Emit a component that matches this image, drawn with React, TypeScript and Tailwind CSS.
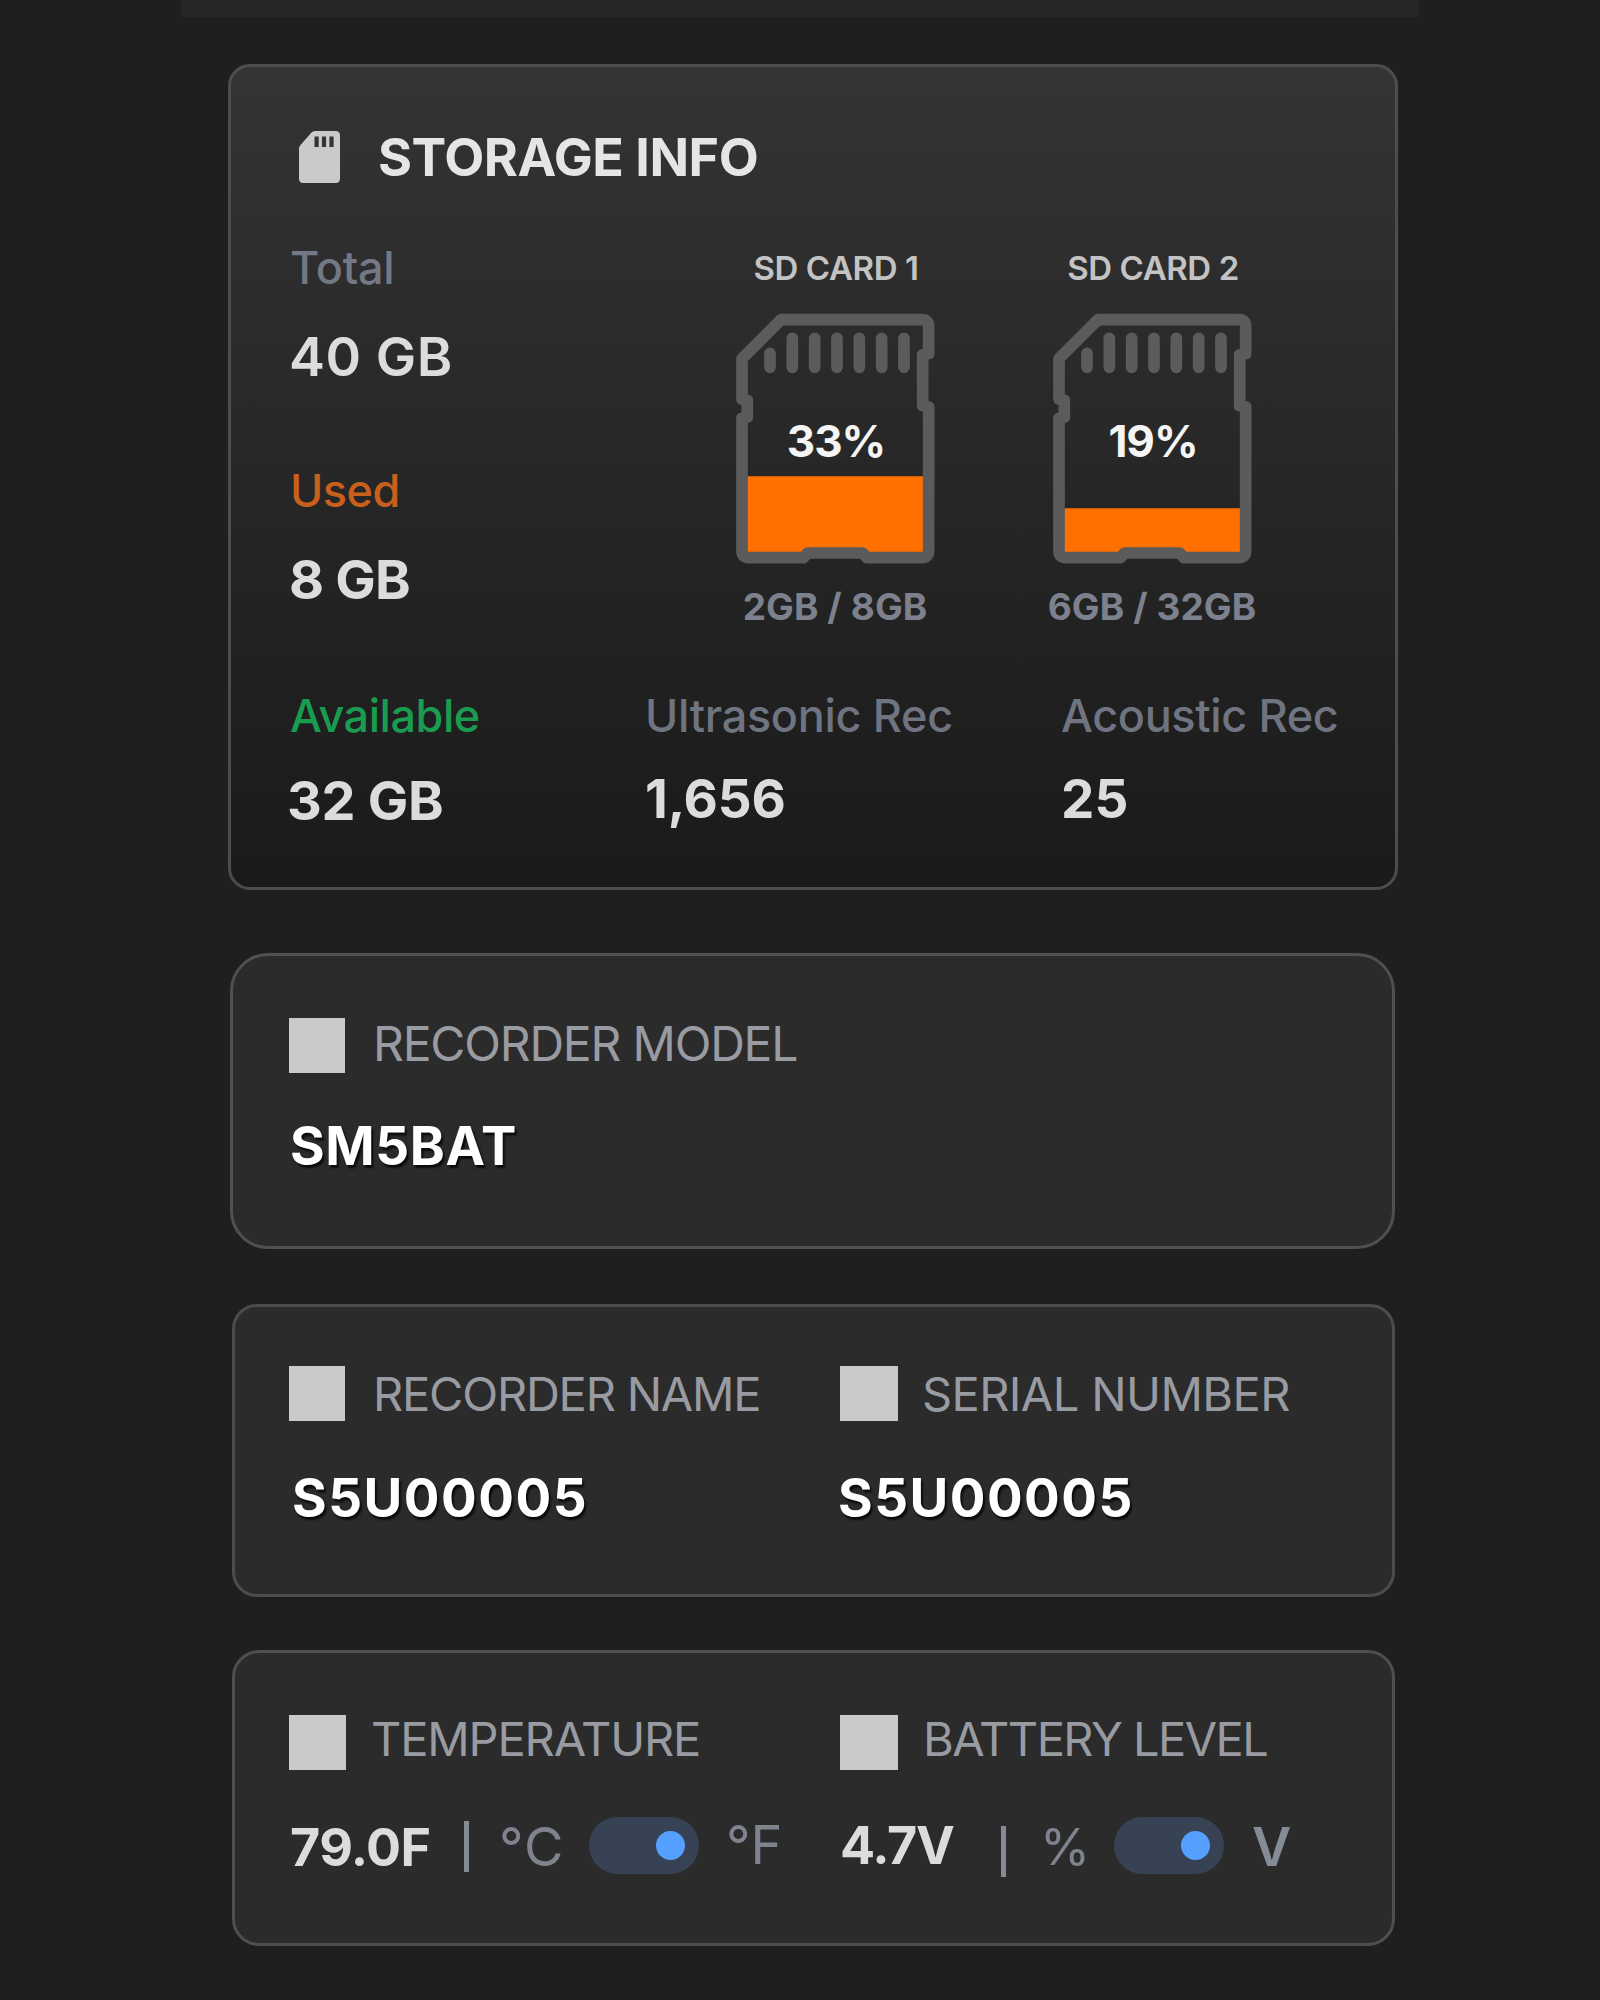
import { useState } from "react";
import type { ReactNode } from "react";

const CARDS = [
  { label: "SD CARD 1", percent: "33%", usage: "2GB / 8GB", fillTop: 738 },
  { label: "SD CARD 2", percent: "19%", usage: "6GB / 32GB", fillTop: 834 },
];

const CONTACTS = [279, 346, 413, 480, 547, 614];

function SdIcon() {
  return (
    <svg width="41" height="52" viewBox="0 0 41 52" className="ml-[10px] shrink-0">
      <path d="M16 0H36.5Q41 0 41 4.5V47.5Q41 52 36.5 52H4.5Q0 52 0 47.5V17.5Q0 15.5 1.5 14L12.5 1.5Q14 0 16 0Z" fill="#c9cbca" />
      <path d="M15.5 5.5h4.2v10.5h-4.2zM22.9 5.5h4.2v10.5h-4.2zM30.4 5.5h4.2v10.5h-4.2z" fill="#333333" />
    </svg>
  );
}

function SdCard({ label, percent, usage, fillTop }: { label: string; percent: string; usage: string; fillTop: number }) {
  return (
    <div className="flex w-[260px] flex-col items-center">
      <div className="pl-0.5 text-[33px] leading-[52px] font-semibold tracking-[-0.4px] text-[#c3c3c4]">{label}</div>
      <div className="relative mt-[18px]">
        <svg width="200" height="253" viewBox="107 245 600 759" fill="none" stroke="#5b5b5b" strokeWidth="35" strokeLinejoin="round">
          <path d={`M143 ${fillTop}H672V970H143Z`} fill="#ff7000" stroke="none" />
          <path d="M245 268H668Q688 268 688 288V370L670 374V526L688 530V962Q688 982 668 982H503L490 968H325L312 982H148Q128 982 128 962V564L144 560V510L128 506V385Z" />
          <path d="M212 369V411" strokeLinecap="round" />
          {CONTACTS.map((x) => <path key={x} d={`M${x} 324V411`} strokeLinecap="round" />)}
        </svg>
        <div className="absolute inset-x-0 top-[103px] pl-0.5 text-center text-[44px] leading-[52px] font-bold tracking-[-1px] text-[#f5f5f5]">{percent}</div>
      </div>
      <div className="mt-4 text-[37px] leading-[52px] font-bold tracking-[0.1px] text-[#7c818d]">{usage}</div>
    </div>
  );
}

function Stat({ label, value, labelClass, valueClass }: { label: string; value: string; labelClass: string; valueClass: string }) {
  return (
    <div>
      <div className={`text-[45px] leading-[52px] font-medium ${labelClass}`}>{label}</div>
      <div className={`leading-[52px] text-[#dcdcde] ${valueClass}`}>{value}</div>
    </div>
  );
}

function Heading({ children, boxClass, textClass }: { children: ReactNode; boxClass: string; textClass: string }) {
  return (
    <div className="flex h-14 items-center">
      <span className={`h-[55px] shrink-0 bg-[#c8cac9] ${boxClass}`} />
      <span className={`leading-[52px] whitespace-nowrap text-[#999ba2] ${textClass}`}>{children}</span>
    </div>
  );
}

function Toggle({ label }: { label: string }) {
  const [on, setOn] = useState(true);
  return (
    <button type="button" role="switch" aria-checked={on} aria-label={label} onClick={() => setOn(!on)} className={`flex h-[57px] w-[110px] shrink-0 items-center rounded-full bg-[#374255] px-[14px] ${on ? "justify-end" : "justify-start"}`}>
      <span className="size-[29px] rounded-full bg-[#559fff]" />
    </button>
  );
}

export default function App() {
  return (
    <div className="flex h-[2000px] w-[1600px] flex-col overflow-hidden bg-[#1f1f1f] font-['Inter',sans-serif]">
      <div className="ml-[181px] h-[17px] w-[1238px] shrink-0 bg-[#272727]" />

      <section className="mt-[47px] ml-[228px] h-[826px] w-[1170px] shrink-0 rounded-[22px] border-3 border-[#4d4d4d] bg-linear-to-b from-[#343434] to-[#1a1a1a] bg-origin-border pt-16 pl-[58px]">
        <div className="flex items-center">
          <SdIcon />
          <h2 className="ml-[38px] pt-0.5 text-[52px] leading-[50px] font-bold tracking-[-0.45px] text-[#e4e5e6]">STORAGE INFO</h2>
        </div>

        <div className="mt-[59px] flex">
          <div className="flex w-[416px] flex-col gap-[82px]">
            <Stat label="Total" value="40 GB" labelClass="ml-px tracking-[-0.2px] text-[#737885]" valueClass="mt-[37px] text-[54px] font-semibold tracking-[0.5px]" />
            <Stat label="Used" value="8 GB" labelClass="ml-px tracking-[-0.5px] text-[#c8601c]" valueClass="mt-[37px] text-[54px] font-bold tracking-[-0.8px]" />
          </div>
          <div className="flex gap-[57px]">
            {CARDS.map((card) => <SdCard key={card.label} {...card} />)}
          </div>
        </div>

        <div className="mt-[57px] flex">
          <div className="w-[356px]">
            <Stat label="Available" value="32 GB" labelClass="ml-px tracking-[-0.45px] text-[#1a9c50]" valueClass="mt-[33px] -ml-0.5 text-[54px] font-bold tracking-[-0.3px]" />
          </div>
          <div className="w-[416px]">
            <Stat label="Ultrasonic Rec" value="1,656" labelClass="tracking-[-0.3px] text-[#6f7481]" valueClass="mt-[31px] text-[53px] font-bold tracking-[-0.2px]" />
          </div>
          <Stat label="Acoustic Rec" value="25" labelClass="tracking-[-0.35px] text-[#6f7481]" valueClass="mt-[31px] text-[53px] font-bold" />
        </div>
      </section>

      <section className="mt-[63px] ml-[230px] h-[296px] w-[1165px] shrink-0 rounded-[38px] border-3 border-[#505050] bg-[#2b2b2b] pt-[61px] pl-14">
        <Heading boxClass="w-14" textClass="ml-[28px] pb-[3px] text-[48px] tracking-[-1.2px]">RECORDER MODEL</Heading>
        <div className="mt-[47px] ml-px text-[53px] leading-[52px] font-bold tracking-[0.6px] text-white [text-shadow:2px_3px_2px_rgba(0,0,0,0.75)]">SM5BAT</div>
      </section>

      <section className="mt-[55px] ml-[232px] flex h-[293px] w-[1163px] shrink-0 rounded-[25px] border-3 border-[#4c4c4c] bg-[#2b2b2b] pt-[58px] pl-[54px]">
        <div className="w-[551px]">
          <Heading boxClass="w-14" textClass="ml-[28px] pt-0.5 text-[47px] tracking-[-1.22px]">RECORDER NAME</Heading>
          <div className="mt-[51px] ml-[3px] text-[53px] leading-[52px] font-bold tracking-[1.5px] text-white [text-shadow:2px_3px_2px_rgba(0,0,0,0.75)]">S5U00005</div>
        </div>
        <div>
          <Heading boxClass="w-[58px]" textClass="ml-6 pt-0.5 text-[47px] tracking-[-0.6px]">SERIAL NUMBER</Heading>
          <div className="mt-[51px] -ml-0.5 text-[53px] leading-[52px] font-bold tracking-[1.45px] text-white [text-shadow:2px_3px_2px_rgba(0,0,0,0.75)]">S5U00005</div>
        </div>
      </section>

      <section className="mt-[53px] ml-[232px] flex h-[296px] w-[1163px] shrink-0 rounded-[27px] border-3 border-[#4f4f4f] bg-[#2b2b2b] pt-[61px] pl-[54px]">
        <div className="w-[551px]">
          <Heading boxClass="w-[57px]" textClass="ml-[25px] pb-[7px] text-[47px] tracking-[-1.15px]">TEMPERATURE</Heading>
          <div className="mt-[47px] flex h-[57px] items-center leading-[52px] text-[#7f838d]">
            <span className="w-[175px] pt-[5px] pl-px text-[52px] font-bold tracking-[-0.6px] text-[#dcdcdd]">79.0F</span>
            <span className="mt-0.5 h-[51px] w-[5px] bg-[#868a95]" />
            <span className="ml-[30px] w-[90px] pt-[2px] text-[54px] tracking-[1px]">°C</span>
            <Toggle label="Temperature unit" />
            <span className="ml-[27px] pb-0.5 text-[54px]">°F</span>
          </div>
        </div>
        <div>
          <Heading boxClass="w-[58px]" textClass="ml-[25px] pb-[7px] text-[47px] tracking-[-1.55px]">BATTERY LEVEL</Heading>
          <div className="mt-[47px] flex h-[57px] items-center leading-[52px] text-[#7f838d]">
            <span className="w-[161px] pt-px text-[52px] font-bold tracking-[-1.2px] text-[#dcdcdd]">4.7V</span>
            <span className="mt-[11px] h-[51px] w-[5px] bg-[#868a95]" />
            <span className="ml-[34px] w-[74px] pt-[3px] text-[51px]">%</span>
            <Toggle label="Battery unit" />
            <span className="ml-[28px] pt-[3px] text-[54px] font-semibold text-[#868c97]">V</span>
          </div>
        </div>
      </section>
    </div>
  );
}
